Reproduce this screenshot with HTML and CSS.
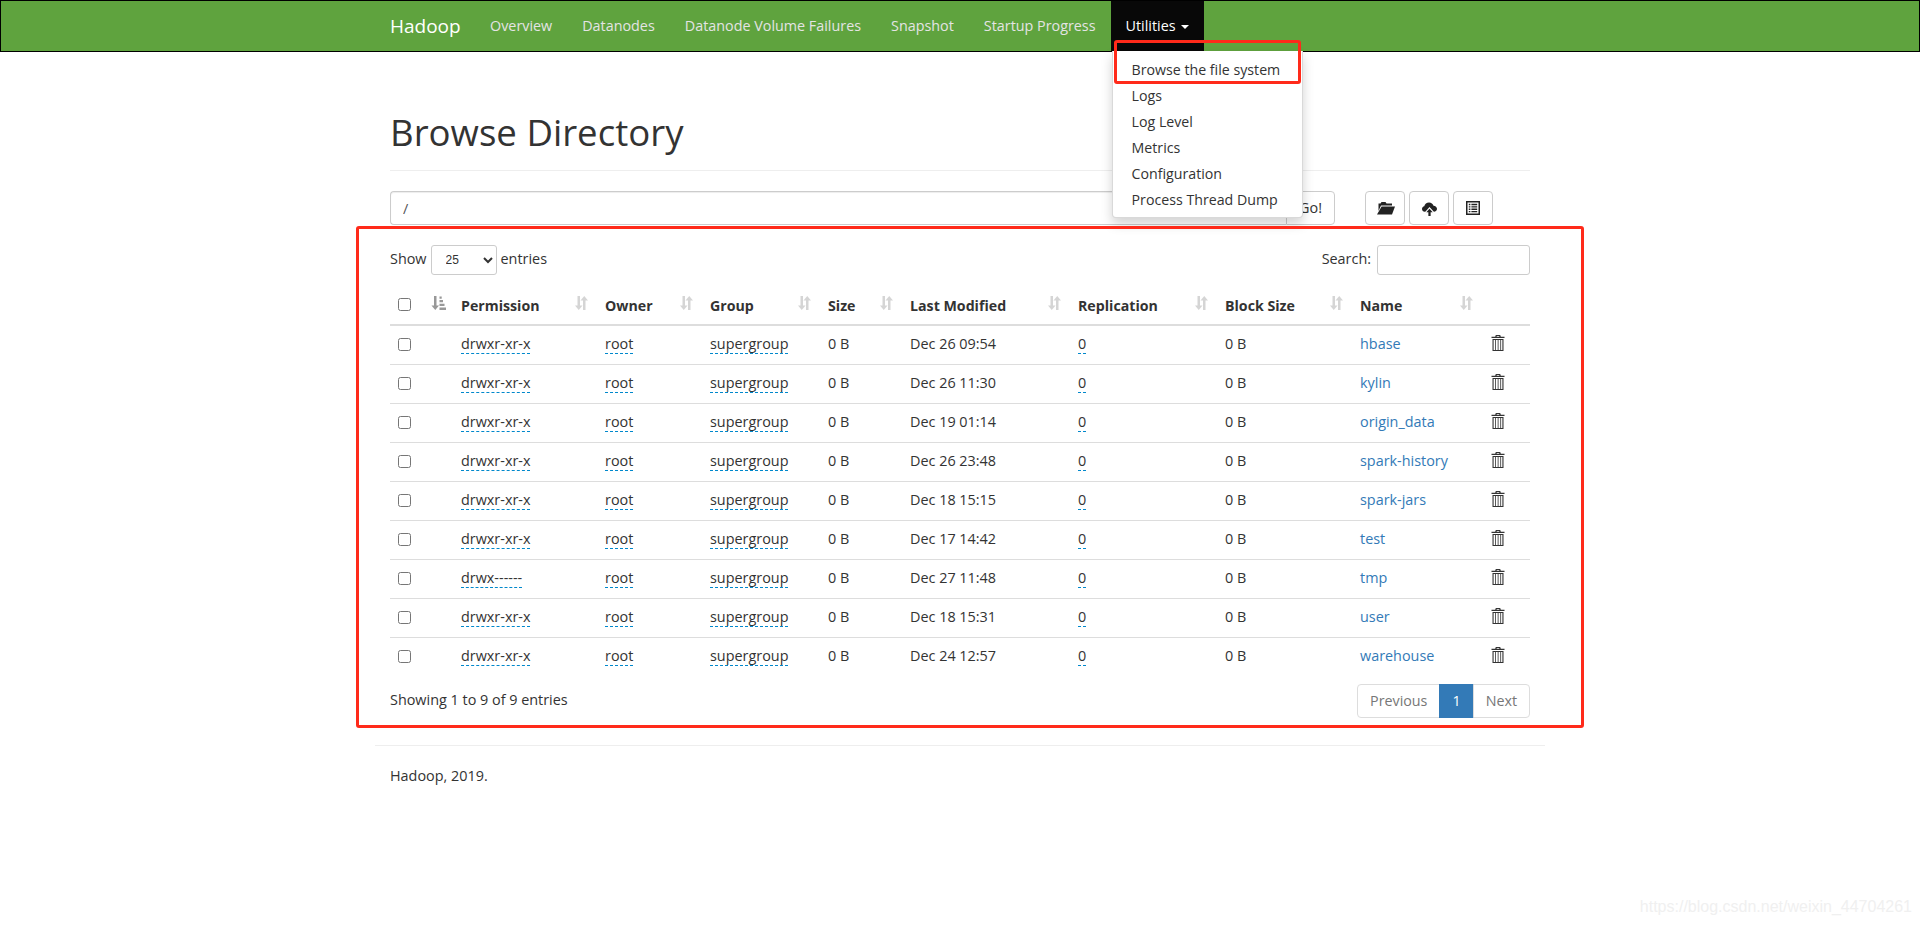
FILE: index.html
```html
<!DOCTYPE html>
<html lang="en">
<head>
<meta charset="utf-8">
<title>Browsing HDFS</title>
<link rel="stylesheet" href="styles.css">
</head>
<body>
<svg class="defs" width="0" height="0" aria-hidden="true">
  <symbol id="i-sort" viewBox="0 0 15 16"><path d="M3.500 1h2.500v9.500h2.500L4.750 15 1 10.500h2.500zM11.500 15H9V5.500H6.500L10.250 1 14 5.500h-2.500z"/></symbol>
  <symbol id="i-sorted" viewBox="0 0 15 16"><path d="M3 1h2.500v9.500H8L4.250 15 .5 10.500H3zM8.500 12.500H15V15H8.500zM8.500 8.800h5v2.200h-5zM8.500 5h3.500v2.200H8.500zM8.500 1.500h2.200v2.200H8.500z"/></symbol>
  <symbol id="i-trash" viewBox="0 0 14 16"><path fill-rule="evenodd" d="M4.800 0h4.400l.6 1.700H13.500V3H.5V1.700h3.700zM5.800 1l-.2.700h2.800L8.200 1zM1.500 4h11v12h-11zM2.600 5v10h1.500V5zM4.900 5v10h1.800V5zM7.500 5v10h1.800V5zM10.100 5v10h1.300V5z"/></symbol>
  <symbol id="i-folder" viewBox="0 0 18 14"><path d="M1.500 2.500h2l1-1.500h4l1 1.500h5.500v2H4L1.500 10zM4.600 5.500H18l-3 8H0z"/></symbol>
  <symbol id="i-cloud" viewBox="0 0 16 16"><path d="M3.500 11.500H3C1.300 11.500 0 10.200 0 8.500 0 7 1 5.900 2.400 5.600 2.900 3.300 5 1.500 7.500 1.500c2.300 0 4.200 1.500 4.800 3.500C14.400 5 16 6.500 16 8.300c0 1.700-1.300 3.200-3.300 3.200L8 6.500z"/><path d="M8 8.200l3.400 3.800H9.200v4H6.800v-4H4.600z"/></symbol>
  <symbol id="i-list" viewBox="0 0 14 16"><path fill-rule="evenodd" d="M0 1h14v14H0zM1.500 2.500v11h11v-11zM2.800 3.800h1.600v1.400H2.800zM5.400 3.800h5.800v1.400H5.400zM2.800 6.200h1.600v1.400H2.800zM5.400 6.200h5.800v1.400H5.400zM2.800 8.600h1.600V10H2.800zM5.400 8.600h5.800V10H5.400zM2.800 11h1.600v1.300H2.800zM5.400 11h5.800v1.300H5.400z"/></symbol>
</svg>

<nav class="navbar">
  <div class="nav-inner">
    <a class="brand">Hadoop</a>
    <a class="nav-link">Overview</a>
    <a class="nav-link">Datanodes</a>
    <a class="nav-link">Datanode Volume Failures</a>
    <a class="nav-link">Snapshot</a>
    <a class="nav-link">Startup Progress</a>
    <div class="nav-drop">
      <a class="nav-link nav-active">Utilities <span class="caret"></span></a>
      <ul class="menu">
        <li>Browse the file system</li>
        <li>Logs</li>
        <li>Log Level</li>
        <li>Metrics</li>
        <li>Configuration</li>
        <li>Process Thread Dump</li>
      </ul>
    </div>
  </div>
</nav>

<main class="container">
  <header class="page-header"><h1>Browse Directory</h1></header>

  <div class="path-row">
    <div class="input-group">
      <input class="path-input" type="text" value="/">
      <button class="btn btn-go">Go!</button>
    </div>
    <div class="tools">
      <button class="btn btn-icon"><svg class="ic-folder"><use href="#i-folder"/></svg></button>
      <button class="btn btn-icon"><svg class="ic-cloud"><use href="#i-cloud"/></svg></button>
      <button class="btn btn-icon"><svg class="ic-list"><use href="#i-list"/></svg></button>
    </div>
  </div>

  <section class="listing">
    <div class="controls">
      <label class="ctl">Show
        <select class="len"><option>25</option></select>
        entries</label>
      <label class="ctl">Search: <input class="search" type="text"></label>
    </div>

    <table class="table">
      <colgroup>
        <col class="c-check"><col class="c-sort"><col class="c-perm"><col class="c-owner"><col class="c-group"><col class="c-size"><col class="c-mod"><col class="c-rep"><col class="c-block"><col class="c-name"><col class="c-del">
      </colgroup>
      <thead>
        <tr>
          <th><input type="checkbox" class="cb"></th>
          <th><svg class="sort sorted"><use href="#i-sorted"/></svg></th>
          <th>Permission<svg class="sort"><use href="#i-sort"/></svg></th>
          <th>Owner<svg class="sort"><use href="#i-sort"/></svg></th>
          <th>Group<svg class="sort"><use href="#i-sort"/></svg></th>
          <th>Size<svg class="sort"><use href="#i-sort"/></svg></th>
          <th>Last Modified<svg class="sort"><use href="#i-sort"/></svg></th>
          <th>Replication<svg class="sort"><use href="#i-sort"/></svg></th>
          <th>Block Size<svg class="sort"><use href="#i-sort"/></svg></th>
          <th>Name<svg class="sort"><use href="#i-sort"/></svg></th>
          <th></th>
        </tr>
      </thead>
      <tbody>
        <tr><td><input type="checkbox" class="cb"></td><td></td><td><span class="ed">drwxr-xr-x</span></td><td><span class="ed">root</span></td><td><span class="ed">supergroup</span></td><td>0 B</td><td>Dec 26 09:54</td><td><span class="ed">0</span></td><td>0 B</td><td><a class="lnk">hbase</a></td><td><svg class="trash"><use href="#i-trash"/></svg></td></tr>
        <tr><td><input type="checkbox" class="cb"></td><td></td><td><span class="ed">drwxr-xr-x</span></td><td><span class="ed">root</span></td><td><span class="ed">supergroup</span></td><td>0 B</td><td>Dec 26 11:30</td><td><span class="ed">0</span></td><td>0 B</td><td><a class="lnk">kylin</a></td><td><svg class="trash"><use href="#i-trash"/></svg></td></tr>
        <tr><td><input type="checkbox" class="cb"></td><td></td><td><span class="ed">drwxr-xr-x</span></td><td><span class="ed">root</span></td><td><span class="ed">supergroup</span></td><td>0 B</td><td>Dec 19 01:14</td><td><span class="ed">0</span></td><td>0 B</td><td><a class="lnk">origin_data</a></td><td><svg class="trash"><use href="#i-trash"/></svg></td></tr>
        <tr><td><input type="checkbox" class="cb"></td><td></td><td><span class="ed">drwxr-xr-x</span></td><td><span class="ed">root</span></td><td><span class="ed">supergroup</span></td><td>0 B</td><td>Dec 26 23:48</td><td><span class="ed">0</span></td><td>0 B</td><td><a class="lnk">spark-history</a></td><td><svg class="trash"><use href="#i-trash"/></svg></td></tr>
        <tr><td><input type="checkbox" class="cb"></td><td></td><td><span class="ed">drwxr-xr-x</span></td><td><span class="ed">root</span></td><td><span class="ed">supergroup</span></td><td>0 B</td><td>Dec 18 15:15</td><td><span class="ed">0</span></td><td>0 B</td><td><a class="lnk">spark-jars</a></td><td><svg class="trash"><use href="#i-trash"/></svg></td></tr>
        <tr><td><input type="checkbox" class="cb"></td><td></td><td><span class="ed">drwxr-xr-x</span></td><td><span class="ed">root</span></td><td><span class="ed">supergroup</span></td><td>0 B</td><td>Dec 17 14:42</td><td><span class="ed">0</span></td><td>0 B</td><td><a class="lnk">test</a></td><td><svg class="trash"><use href="#i-trash"/></svg></td></tr>
        <tr><td><input type="checkbox" class="cb"></td><td></td><td><span class="ed">drwx------</span></td><td><span class="ed">root</span></td><td><span class="ed">supergroup</span></td><td>0 B</td><td>Dec 27 11:48</td><td><span class="ed">0</span></td><td>0 B</td><td><a class="lnk">tmp</a></td><td><svg class="trash"><use href="#i-trash"/></svg></td></tr>
        <tr><td><input type="checkbox" class="cb"></td><td></td><td><span class="ed">drwxr-xr-x</span></td><td><span class="ed">root</span></td><td><span class="ed">supergroup</span></td><td>0 B</td><td>Dec 18 15:31</td><td><span class="ed">0</span></td><td>0 B</td><td><a class="lnk">user</a></td><td><svg class="trash"><use href="#i-trash"/></svg></td></tr>
        <tr><td><input type="checkbox" class="cb"></td><td></td><td><span class="ed">drwxr-xr-x</span></td><td><span class="ed">root</span></td><td><span class="ed">supergroup</span></td><td>0 B</td><td>Dec 24 12:57</td><td><span class="ed">0</span></td><td>0 B</td><td><a class="lnk">warehouse</a></td><td><svg class="trash"><use href="#i-trash"/></svg></td></tr>
      </tbody>
    </table>

    <div class="foot-row">
      <div class="info">Showing 1 to 9 of 9 entries</div>
      <div class="pager">
        <a class="pg">Previous</a><a class="pg pg-on">1</a><a class="pg">Next</a>
      </div>
    </div>
  </section>

  <footer class="footer">
    <hr class="foot-hr">
    <p class="foot-text">Hadoop, 2019.</p>
  </footer>
</main>

<div class="mark mark-menu"></div>
<div class="mark mark-table"></div>
<div class="watermark">https://blog.csdn.net/weixin_44704261</div>
</body>
</html>
```

FILE: styles.css
```css
* { box-sizing: border-box; }
html, body { margin: 0; padding: 0; }
body {
  position: relative;
  min-height: 927px;
  overflow: hidden;
  background: #fff;
  color: #333;
  font-family: "Open Sans", "Liberation Sans", sans-serif;
  font-size: 14.4px;
  line-height: 20px;
}
.defs { position: absolute; }

.navbar {
  height: 52px;
  background: #5fa33e;
  border: 1px solid #000;
}
.nav-inner {
  width: 1170px;
  margin: 0 auto;
  display: flex;
  height: 50px;
}
.brand {
  padding: 15px;
  color: #fff;
  font-size: 19px;
  line-height: 20px;
  width: 100px;
  white-space: nowrap;
}
.nav-link {
  display: block;
  padding: 15px;
  color: #e4e4e4;
  font-size: 14.35px;
  line-height: 20px;
  white-space: nowrap;
}
.nav-drop { position: relative; }
.nav-active { background: #080808; color: #fff; height: 50px; }
.caret {
  display: inline-block;
  width: 0;
  height: 0;
  margin-left: 2px;
  vertical-align: middle;
  border-top: 4px solid #fff;
  border-left: 4px solid transparent;
  border-right: 4px solid transparent;
}
.menu {
  position: absolute;
  top: 50px;
  left: 1px;
  z-index: 5;
  width: 191px;
  margin: 0;
  padding: 6px 0 4px;
  list-style: none;
  background: #fff;
  border: 1px solid rgba(0,0,0,.15);
  border-top: 0;
  border-radius: 0 0 4px 4px;
  box-shadow: 0 6px 12px rgba(0,0,0,.175);
}
.menu li {
  height: 26px;
  padding: 3px 19px;
  font-size: 14.2px;
  white-space: nowrap;
  color: #333;
}

.container {
  width: 1170px;
  margin: 0 auto;
  padding: 0 15px;
}
.page-header {
  margin: 40px 0 20px;
  border-bottom: 1px solid #eee;
  height: 79px;
}
.page-header h1 {
  margin: 0;
  padding-top: 20px;
  font-size: 36.6px;
  font-weight: 400;
  line-height: 40px;
}
.path-row {
  display: flex;
  height: 34px;
}
.input-group { display: flex; width: 945px; }
.path-input {
  width: 896px;
  height: 34px;
  padding: 6px 12px;
  font: inherit;
  color: #555;
  border: 1px solid #ccc;
  border-right: 0;
  border-radius: 4px 0 0 4px;
  box-shadow: inset 0 1px 1px rgba(0,0,0,.075);
}
.btn {
  height: 34px;
  padding: 6px 12px;
  font: inherit;
  color: #333;
  background: #fff;
  border: 1px solid #ccc;
  border-radius: 4px;
}
.btn-go { width: 49px; padding: 0; border-radius: 0 4px 4px 0; }
.tools { display: flex; gap: 4px; margin-left: 30px; }
.btn-icon {
  width: 40px;
  padding: 0;
  display: flex;
  align-items: center;
  justify-content: center;
}
.ic-folder { width: 18px; height: 14px; margin-left: 2px; fill: #222; }
.ic-cloud { width: 15px; height: 15px; fill: #222; }
.ic-list { width: 14px; height: 16px; fill: #222; }

.listing { margin-top: 20px; }
.controls {
  display: flex;
  justify-content: space-between;
  height: 30px;
}
.ctl { display: flex; align-items: center; gap: 4px; white-space: nowrap; padding-bottom: 2px; }
.len {
  width: 66px;
  height: 30px;
  margin-top: 2px;
  padding: 0 10px;
  font-size: 12px;
  font-family: "Liberation Sans", sans-serif;
  color: #333;
  background: #fff;
  border: 1px solid #ccc;
  border-radius: 3px;
}
.search {
  width: 153px;
  height: 30px;
  margin: 2px 0 0 2px;
  border: 1px solid #ccc;
  border-radius: 3px;
}

.table {
  width: 1140px;
  margin-top: 9px;
  table-layout: fixed;
  border-collapse: collapse;
}
.c-check { width: 33px; }
.c-sort { width: 30px; }
.c-perm { width: 144px; }
.c-owner { width: 105px; }
.c-group { width: 118px; }
.c-size { width: 82px; }
.c-mod { width: 168px; }
.c-rep { width: 147px; }
.c-block { width: 135px; }
.c-name { width: 130px; }
.c-del { width: 48px; }
.table th {
  position: relative;
  height: 41px;
  padding: 3px 8px 0;
  text-align: left;
  font-weight: 700;
  font-size: 14.2px;
  white-space: nowrap;
  border-bottom: 2px solid #ddd;
}
.table td {
  height: 39px;
  padding: 0 8px 2px;
  white-space: nowrap;
  border-bottom: 1px solid #ddd;
}
.table tbody tr:last-child td { border-bottom: 0; }
.cb { display: block; width: 13px; height: 13px; margin: 0; }
.table td .cb { margin-top: 2px; }
.table th .cb { margin-top: -3px; }
.sort {
  position: absolute;
  right: 8px;
  top: 11px;
  width: 15px;
  height: 16px;
  fill: #333;
  opacity: .2;
}
.sorted { position: static; display: block; opacity: .5; margin: -5px 0 0 0; }
.ed { display: inline-block; line-height: 18px; border-bottom: 1px dashed #08c; }
.lnk { color: #337ab7; }
.trash { display: block; width: 14px; height: 16px; margin: -2px 0 0 1px; fill: #333; }

.foot-row {
  display: flex;
  justify-content: space-between;
  margin-top: 8px;
}
.info { padding-top: 6px; }
.pager { display: flex; height: 34px; }
.pg {
  padding: 6px 12px;
  color: #777;
  font-size: 14.3px;
  background: #fff;
  border: 1px solid #ddd;
  margin-left: -1px;
}
.pg:first-child { border-radius: 4px 0 0 4px; }
.pg:last-child { border-radius: 0 4px 4px 0; }
.pg-on { color: #fff; background: #337ab7; border-color: #337ab7; }

.footer { margin: 27px -15px 0; }
.foot-hr { margin: 0; border: 0; border-top: 1px solid #eee; }
.foot-text { margin: 20px 15px 0; }

.mark {
  position: absolute;
  z-index: 10;
  border: 3px solid #ff2a1a;
  border-radius: 3px;
  pointer-events: none;
}
.mark-menu { left: 1114px; top: 40px; width: 187px; height: 44px; }
.mark-table { left: 356px; top: 226px; width: 1228px; height: 502px; }
.watermark {
  position: absolute;
  right: 8px;
  top: 897px;
  font-family: "Liberation Sans", sans-serif;
  font-size: 16px;
  color: #f0f0f0;
  white-space: nowrap;
}
```
